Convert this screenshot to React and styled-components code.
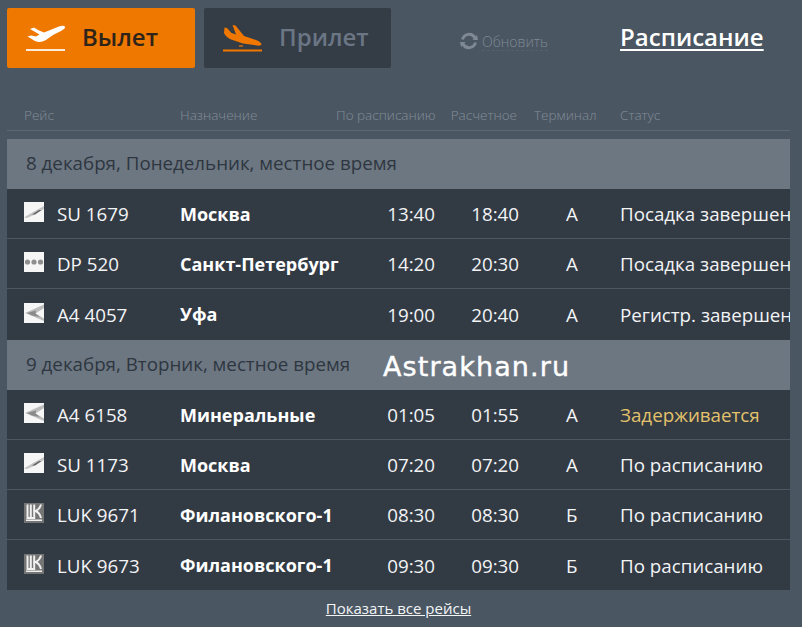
import React from 'react';
import styled, { createGlobalStyle } from 'styled-components';

const GlobalStyle = createGlobalStyle`
	html, body {
		margin: 0;
		padding: 0;
		background: #4a5662;
	}
	body {
		font-family: "Open Sans", "Liberation Sans", sans-serif;
		width: 802px;
		height: 627px;
		overflow: hidden;
	}
`

const groups = [
	{
		title: '8 декабря, Понедельник, местное время',
		flights: [
			{ logo: 'su', code: 'SU 1679', city: 'Москва', plan: '13:40', calc: '18:40', term: 'A', status: 'Посадка завершена' },
			{ logo: 'dp', code: 'DP 520', city: 'Санкт-Петербург', plan: '14:20', calc: '20:30', term: 'A', status: 'Посадка завершена' },
			{ logo: 'a4', code: 'A4 4057', city: 'Уфа', plan: '19:00', calc: '20:40', term: 'A', status: 'Регистр. завершена' },
		],
	},
	{
		title: '9 декабря, Вторник, местное время',
		flights: [
			{ logo: 'a4', code: 'A4 6158', city: 'Минеральные', plan: '01:05', calc: '01:55', term: 'A', status: 'Задерживается', late: true },
			{ logo: 'su', code: 'SU 1173', city: 'Москва', plan: '07:20', calc: '07:20', term: 'A', status: 'По расписанию' },
			{ logo: 'luk', code: 'LUK 9671', city: 'Филановского-1', plan: '08:30', calc: '08:30', term: 'Б', status: 'По расписанию' },
			{ logo: 'luk', code: 'LUK 9673', city: 'Филановского-1', plan: '09:30', calc: '09:30', term: 'Б', status: 'По расписанию' },
		],
	},
]

const TakeoffIcon = () => (
	<svg width="40" height="28" viewBox="0 0 40 28">
		<path fill="#fff" d="M4 5 L8 3.500 L12 6 L18 8.500 L33 2.500 Q38.500 1 39 3 Q39.500 4.500 35 7 L27 11 L20 16 Q14 19.500 9 17 L1.500 12.500 L5 11.500 L10 12.500 L13.500 10.500 Z" />
		<rect x="0" y="25" width="39" height="2" fill="#fff" opacity="0.85" />
	</svg>
)

const LandingIcon = () => (
	<svg width="40" height="28" viewBox="0 0 40 28">
		<path fill="#f07800" d="M1 9 L1.500 3.500 L4 4 L8.500 9 L13 10.500 L9.500 1 L12.500 1.500 L21 12 L33 16 Q38.500 18 38.500 20.500 Q38 22 34 21.500 L20 19.500 L8 15.500 Q3 13 1 9 Z" />
		<rect x="16" y="21" width="4" height="2" fill="#f07800" opacity="0.6" />
		<rect x="0" y="25.500" width="39" height="2" fill="#f07800" />
	</svg>
)

const RefreshIcon = () => (
	<svg width="18" height="18" viewBox="0 0 18 18">
		<g fill="none" stroke="#7f8994" strokeWidth="3">
			<path d="M2.500 7.500 A6.700 6.700 0 0 1 15 6" />
			<path d="M15.500 10.500 A6.700 6.700 0 0 1 3 12" />
		</g>
		<path fill="#7f8994" d="M12.500 8 L18 8 L17 3 Z M5.500 10 L0 10 L1 15 Z" />
	</svg>
)

const AirlineLogo = ({ kind }) => {
	if (kind === 'luk') {
		return (
			<LogoSvg width="20" height="20" viewBox="0 0 20 20">
				<rect width="20" height="20" fill="#757575" />
				<g fill="none" stroke="#f0f0f0" strokeWidth="2">
					<path d="M3.500 1.500 V15 H6.800 V1.500" />
					<path d="M10.200 1.500 V15 H7" />
					<path d="M17 1.500 Q15.500 6.500 11.500 8 Q15.500 9.500 17 15" />
				</g>
				<rect x="2" y="16.500" width="16" height="1.500" fill="#f0f0f0" />
			</LogoSvg>
		)
	}
	return (
		<LogoSvg width="20" height="20" viewBox="0 0 20 20">
			<defs>
				<filter id="soft" x="-20%" y="-20%" width="140%" height="140%">
					<feGaussianBlur stdDeviation="0.7" />
				</filter>
			</defs>
			<rect width="20" height="20" fill="#f6f6f6" />
			{kind === 'su' && (
				<g filter="url(#soft)">
					<path fill="#c4c4c4" d="M0 15.500 L9 10 L20 4 L20 7 L11 12.500 L3 16 Z" />
					<path fill="#666" d="M8 12.500 L15 8 L17.500 8 L11 12.500 Z" />
				</g>
			)}
			{kind === 'dp' && (
				<g filter="url(#soft)" fill="#8f8f8f">
					<circle cx="3.500" cy="10" r="2.600" />
					<circle cx="10" cy="10" r="2.600" />
					<circle cx="16.500" cy="10" r="2.600" />
				</g>
			)}
			{kind === 'a4' && (
				<g filter="url(#soft)">
					<path fill="#bdbdbd" d="M20 1.500 L1 10 L20 18 L20 15.500 L11.500 10.500 L20 5 Z" />
					<path fill="#8a8a8a" d="M3 10 L12 7.500 L11.500 10.500 L16 14 L8 12.500 Z" />
				</g>
			)}
		</LogoSvg>
	)
}

const App = () => {
	return (
		<Page>
			<GlobalStyle />
			<Toolbar>
				<DirectionButton $active>
					<TakeoffIcon />
					<span>Вылет</span>
				</DirectionButton>
				<DirectionButton>
					<LandingIcon />
					<span>Прилет</span>
				</DirectionButton>
				<Refresh>
					<RefreshIcon />
					<span>Обновить</span>
				</Refresh>
				<ScheduleLink href="#schedule">Расписание</ScheduleLink>
			</Toolbar>

			<HeadRow>
				<HeadCell $wide>Рейс</HeadCell>
				<HeadCell>Назначение</HeadCell>
				<HeadCell $right>По расписанию</HeadCell>
				<HeadCell $right $padRight={2}>Расчетное</HeadCell>
				<HeadCell $pad={15}>Терминал</HeadCell>
				<HeadCell>Статус</HeadCell>
			</HeadRow>

			<Board>
				{groups.map((group) => (
					<Group key={group.title}>
						<DateRow>{group.title}</DateRow>
						{group.flights.map((item) => (
							<FlightRow key={item.code}>
								<LogoCell><AirlineLogo kind={item.logo} /></LogoCell>
								<Cell>{item.code}</Cell>
								<City>{item.city}</City>
								<Cell $right>{item.plan}</Cell>
								<Cell $right>{item.calc}</Cell>
								<Cell $pad={47}>{item.term}</Cell>
								<Status $late={item.late}>{item.status}</Status>
							</FlightRow>
						))}
					</Group>
				))}
				<Watermark>Astrakhan.ru</Watermark>
			</Board>

			<Footer>
				<ShowAll href="#all">Показать все рейсы</ShowAll>
			</Footer>
		</Page>
	)
}

export default App

const columns = '33px 123px 156px 99px 84px 101px 1fr'

const Page = styled.div`
	width: 802px;
	height: 627px;
	padding: 8px 12px 0 7px;
	box-sizing: border-box;
`
const Toolbar = styled.div`
	display: flex;
	align-items: center;
	height: 60px;
`
const DirectionButton = styled.div`
	display: flex;
	align-items: center;
	gap: 16px;
	box-sizing: border-box;
	width: ${props => props.$active ? '188px' : '187px'};
	height: 60px;
	margin-right: 9px;
	padding-left: 19px;
	border-radius: 2px;
	background: ${props => props.$active ? '#ee7800' : '#343c46'};
	color: ${props => props.$active ? '#2f2419' : '#6b7685'};
	font-size: 24px;
	font-weight: 600;

	svg {
		flex: none;
	}
	span {
		margin-bottom: 4px;
	}
`
const Refresh = styled.div`
	display: flex;
	align-items: center;
	gap: 4px;
	margin: 6px 0 0 60px;
	color: #7f8994;
	font-size: 14px;
	font-weight: 300;

	span {
		margin-top: 2px;
		border-bottom: 1px dashed #56616d;
		line-height: 17px;
	}
`
const ScheduleLink = styled.a`
	margin: 0 0 2px 72px;
	color: #fff;
	font-size: 24px;
	font-weight: 600;
	line-height: 30px;
	text-decoration: underline;
	text-decoration-thickness: 2px;
	text-underline-offset: 3px;
`
const HeadRow = styled.div`
	display: grid;
	grid-template-columns: ${columns};
	align-items: end;
	box-sizing: border-box;
	height: 39px;
	margin: 24px 0 8px;
	padding: 0 0 6px 17px;
	border-bottom: 1px solid #5d6873;
`
const HeadCell = styled.div`
	grid-column: ${props => props.$wide ? 'span 2' : 'auto'};
	padding-left: ${props => props.$pad || 0}px;
	padding-right: ${props => props.$padRight || 0}px;
	text-align: ${props => props.$right ? 'right' : 'left'};
	color: #838d98;
	font-size: 13.5px;
	line-height: 18px;
	font-weight: 300;
	white-space: nowrap;
`
const Board = styled.div`
	position: relative;
	overflow: hidden;
	background: #323a44;
`
const Group = styled.div`
	& + & {
		margin-top: 1px;
	}
`
const DateRow = styled.div`
	display: flex;
	align-items: center;
	box-sizing: border-box;
	height: 50px;
	padding: 0 0 3px 19px;
	background: #6d7782;
	color: #2e3640;
	font-size: 18.75px;
`
const FlightRow = styled.div`
	display: grid;
	grid-template-columns: ${columns};
	align-items: center;
	box-sizing: border-box;
	height: 50px;
	padding-left: 17px;
	border-bottom: 1px solid #4a5662;
	color: #f2f4f6;
	font-size: 18.75px;

	&:last-child {
		border-bottom: 0;
	}
`
const LogoCell = styled.div`
	display: flex;
	margin-top: -3px;
`
const LogoSvg = styled.svg`
	display: block;
`
const Cell = styled.div`
	padding-left: ${props => props.$pad || 0}px;
	text-align: ${props => props.$right ? 'right' : 'left'};
	white-space: nowrap;
`
const City = styled(Cell)`
	color: #fff;
	font-size: 18px;
	font-weight: 700;
`
const Status = styled(Cell)`
	color: ${props => props.$late ? '#e3c26b' : '#f2f4f6'};
	overflow: hidden;
`
const Watermark = styled.div`
	position: absolute;
	left: 376px;
	top: 212px;
	color: #fff;
	font-family: "DejaVu Sans", sans-serif;
	font-size: 27px;
	letter-spacing: 1.1px;
	-webkit-text-stroke: 0.4px #fff;
	white-space: nowrap;
`
const Footer = styled.div`
	display: flex;
	justify-content: center;
	margin-top: 8px;
`
const ShowAll = styled.a`
	color: #f2f4f6;
	font-size: 15px;
	text-decoration: underline;
`
